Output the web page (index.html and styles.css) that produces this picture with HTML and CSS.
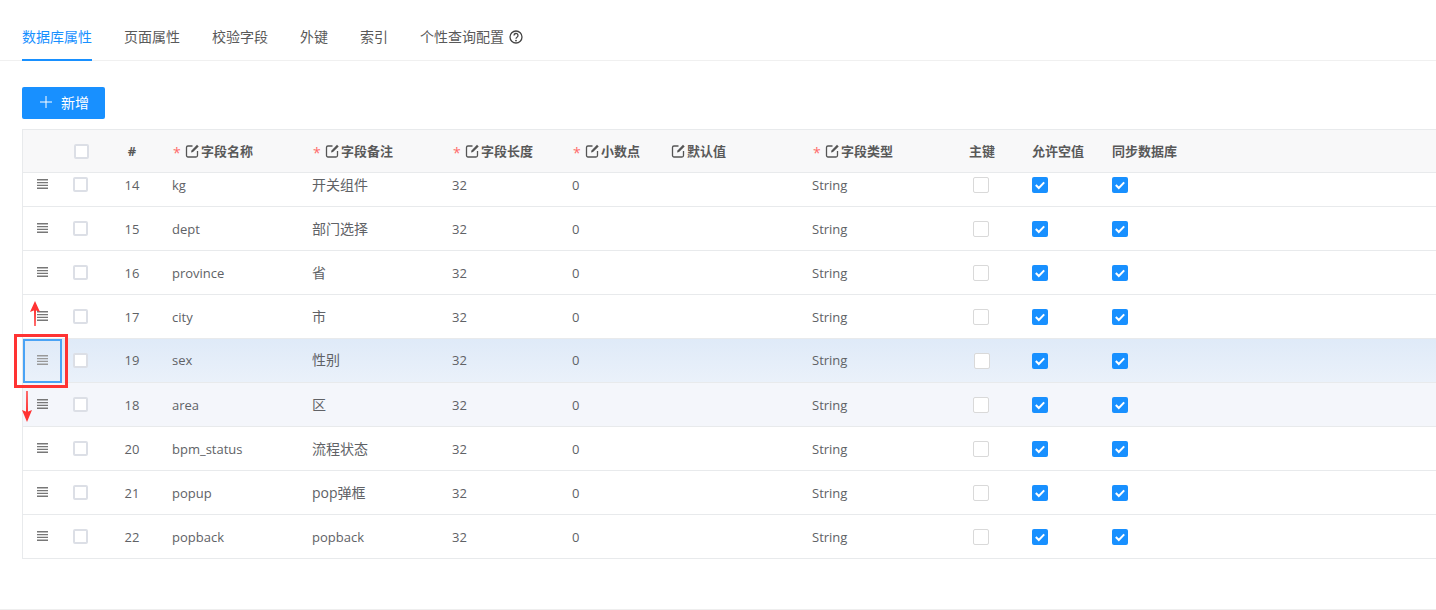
FILE: index.html

```html
<!DOCTYPE html>
<html lang="en">
<head>
  <meta charset="UTF-8" />
  <title>数据库属性</title>
  <link rel="stylesheet" href="styles.css">
</head>
<body>

  <svg class="defs" width="0" height="0">
    <symbol id="edit" viewBox="0 0 14 14">
      <path d="M12 7v4.500a1.500 1.500 0 0 1-1.500 1.500H2.500A1.500 1.500 0 0 1 1 11.500V3.500A1.500 1.500 0 0 1 2.500 2H7" fill="none" stroke="currentColor" stroke-width="1.300"/>
      <path d="M5.500 8.500 6 6.500 11.500.8 13.200 2.500 7.500 8z" fill="currentColor"/>
    </symbol>
    <symbol id="bars" viewBox="0 0 11 10">
      <path d="M0 .7h11M0 3.600h11M0 6.400h11M0 9.300h11" stroke="currentColor" stroke-width="1.400"/>
    </symbol>
    <symbol id="tick" viewBox="0 0 16 16">
      <path d="M3.800 8 6.800 11 12.200 5.400" fill="none" stroke="#fff" stroke-width="2"/>
    </symbol>
  </svg>

  <div class="tabs">
    <a class="tab active">数据库属性</a>
    <a class="tab">页面属性</a>
    <a class="tab">校验字段</a>
    <a class="tab">外键</a>
    <a class="tab">索引</a>
    <a class="tab">个性查询配置
      <svg class="help" viewBox="0 0 14 14" width="14" height="14">
        <circle cx="7" cy="7" r="6" fill="none" stroke="currentColor" stroke-width="1.300"/>
        <path d="M5 5.500a2 2 0 1 1 3 1.700c-.7.400-1 .8-1 1.600" fill="none" stroke="currentColor" stroke-width="1.300"/>
        <circle cx="7" cy="10.600" r=".9" fill="currentColor"/>
      </svg>
    </a>
  </div>

  <div class="toolbar">
    <button class="add-btn">
      <svg viewBox="0 0 12 12" width="12" height="12"><path d="M6 0v12M0 6h12" stroke="#fff" stroke-width="1"/></svg>
      新增
    </button>
  </div>

  <div class="table">
    <div class="row head">
      <div class="cell"></div>
      <div class="cell center"><span class="box"></span></div>
      <div class="cell center">#</div>
      <div class="cell"><i class="req">*</i><svg class="edit"><use href="#edit"/></svg>字段名称</div>
      <div class="cell"><i class="req">*</i><svg class="edit"><use href="#edit"/></svg>字段备注</div>
      <div class="cell"><i class="req">*</i><svg class="edit"><use href="#edit"/></svg>字段长度</div>
      <div class="cell"><i class="req">*</i><svg class="edit"><use href="#edit"/></svg>小数点</div>
      <div class="cell"><svg class="edit"><use href="#edit"/></svg>默认值</div>
      <div class="cell"><i class="req">*</i><svg class="edit"><use href="#edit"/></svg>字段类型</div>
      <div class="cell center">主键</div>
      <div class="cell wide">允许空值</div>
      <div class="cell wide">同步数据库</div>
    </div>

    <div class="rows">
      <div class="row">
        <div class="cell center handle"><svg class="bars"><use href="#bars"/></svg></div>
        <div class="cell center"><span class="box"></span></div>
        <div class="cell center">14</div>
        <div class="cell">kg</div>
        <div class="cell cn">开关组件</div>
        <div class="cell">32</div>
        <div class="cell">0</div>
        <div class="cell"></div>
        <div class="cell">String</div>
        <div class="cell center"><span class="check"></span></div>
        <div class="cell wide"><span class="check on"><svg><use href="#tick"/></svg></span></div>
        <div class="cell wide"><span class="check on"><svg><use href="#tick"/></svg></span></div>
      </div>
      <div class="row">
        <div class="cell center handle"><svg class="bars"><use href="#bars"/></svg></div>
        <div class="cell center"><span class="box"></span></div>
        <div class="cell center">15</div>
        <div class="cell">dept</div>
        <div class="cell cn">部门选择</div>
        <div class="cell">32</div>
        <div class="cell">0</div>
        <div class="cell"></div>
        <div class="cell">String</div>
        <div class="cell center"><span class="check"></span></div>
        <div class="cell wide"><span class="check on"><svg><use href="#tick"/></svg></span></div>
        <div class="cell wide"><span class="check on"><svg><use href="#tick"/></svg></span></div>
      </div>
      <div class="row">
        <div class="cell center handle"><svg class="bars"><use href="#bars"/></svg></div>
        <div class="cell center"><span class="box"></span></div>
        <div class="cell center">16</div>
        <div class="cell">province</div>
        <div class="cell cn">省</div>
        <div class="cell">32</div>
        <div class="cell">0</div>
        <div class="cell"></div>
        <div class="cell">String</div>
        <div class="cell center"><span class="check"></span></div>
        <div class="cell wide"><span class="check on"><svg><use href="#tick"/></svg></span></div>
        <div class="cell wide"><span class="check on"><svg><use href="#tick"/></svg></span></div>
      </div>
      <div class="row">
        <div class="cell center handle"><svg class="bars"><use href="#bars"/></svg></div>
        <div class="cell center"><span class="box"></span></div>
        <div class="cell center">17</div>
        <div class="cell">city</div>
        <div class="cell cn">市</div>
        <div class="cell">32</div>
        <div class="cell">0</div>
        <div class="cell"></div>
        <div class="cell">String</div>
        <div class="cell center"><span class="check"></span></div>
        <div class="cell wide"><span class="check on"><svg><use href="#tick"/></svg></span></div>
        <div class="cell wide"><span class="check on"><svg><use href="#tick"/></svg></span></div>
      </div>
      <div class="row dragging">
        <div class="cell center handle"><svg class="bars"><use href="#bars"/></svg></div>
        <div class="cell center"><span class="box"></span></div>
        <div class="cell center">19</div>
        <div class="cell">sex</div>
        <div class="cell cn">性别</div>
        <div class="cell">32</div>
        <div class="cell">0</div>
        <div class="cell"></div>
        <div class="cell">String</div>
        <div class="cell center"><span class="check"></span></div>
        <div class="cell wide"><span class="check on"><svg><use href="#tick"/></svg></span></div>
        <div class="cell wide"><span class="check on"><svg><use href="#tick"/></svg></span></div>
      </div>
      <div class="row hover">
        <div class="cell center handle"><svg class="bars"><use href="#bars"/></svg></div>
        <div class="cell center"><span class="box"></span></div>
        <div class="cell center">18</div>
        <div class="cell">area</div>
        <div class="cell cn">区</div>
        <div class="cell">32</div>
        <div class="cell">0</div>
        <div class="cell"></div>
        <div class="cell">String</div>
        <div class="cell center"><span class="check"></span></div>
        <div class="cell wide"><span class="check on"><svg><use href="#tick"/></svg></span></div>
        <div class="cell wide"><span class="check on"><svg><use href="#tick"/></svg></span></div>
      </div>
      <div class="row">
        <div class="cell center handle"><svg class="bars"><use href="#bars"/></svg></div>
        <div class="cell center"><span class="box"></span></div>
        <div class="cell center">20</div>
        <div class="cell">bpm_status</div>
        <div class="cell cn">流程状态</div>
        <div class="cell">32</div>
        <div class="cell">0</div>
        <div class="cell"></div>
        <div class="cell">String</div>
        <div class="cell center"><span class="check"></span></div>
        <div class="cell wide"><span class="check on"><svg><use href="#tick"/></svg></span></div>
        <div class="cell wide"><span class="check on"><svg><use href="#tick"/></svg></span></div>
      </div>
      <div class="row">
        <div class="cell center handle"><svg class="bars"><use href="#bars"/></svg></div>
        <div class="cell center"><span class="box"></span></div>
        <div class="cell center">21</div>
        <div class="cell">popup</div>
        <div class="cell cn">pop弹框</div>
        <div class="cell">32</div>
        <div class="cell">0</div>
        <div class="cell"></div>
        <div class="cell">String</div>
        <div class="cell center"><span class="check"></span></div>
        <div class="cell wide"><span class="check on"><svg><use href="#tick"/></svg></span></div>
        <div class="cell wide"><span class="check on"><svg><use href="#tick"/></svg></span></div>
      </div>
      <div class="row">
        <div class="cell center handle"><svg class="bars"><use href="#bars"/></svg></div>
        <div class="cell center"><span class="box"></span></div>
        <div class="cell center">22</div>
        <div class="cell">popback</div>
        <div class="cell">popback</div>
        <div class="cell">32</div>
        <div class="cell">0</div>
        <div class="cell"></div>
        <div class="cell">String</div>
        <div class="cell center"><span class="check"></span></div>
        <div class="cell wide"><span class="check on"><svg><use href="#tick"/></svg></span></div>
        <div class="cell wide"><span class="check on"><svg><use href="#tick"/></svg></span></div>
      </div>
    </div>
  </div>

  <div class="footer-line"></div>

  <!-- red marks drawn on top of the screenshot -->
  <div class="mark-box"></div>
  <svg class="mark-up" viewBox="0 0 12 25" width="12" height="25"><path d="M5 9h2l-.3 16h-1.400zM6 0l5 11-5-2-5 2z" fill="#f33"/></svg>
  <svg class="mark-down" viewBox="0 0 12 31" width="12" height="31"><path d="M5.300 0h1.400l.3 21H5zM1 19l5 2 5-2-5 12z" fill="#f33"/></svg>

</body>
</html>
```

FILE: styles.css

```css
html, body { margin: 0; padding: 0; }
body { position: relative; height: 610px; overflow: hidden; background: #fff; color: #606266; font-family: "Open Sans", "Noto Sans CJK SC", sans-serif; font-size: 14px; }
.defs { position: absolute; }

.tabs { display: flex; gap: 32px; height: 60px; padding-left: 22px; border-bottom: 1px solid #f0f0f0; }
.tab { display: flex; align-items: center; gap: 4px; height: 60px; box-sizing: border-box; padding-top: 14px; color: #595959; font-size: 14px; line-height: 22px; }
.tab.active { color: #1890ff; position: relative; }
.tab.active::after { content: ""; position: absolute; left: 0; right: 0; bottom: -1px; height: 2px; background: #1890ff; }
.help { color: #444; margin-left: 1px; }

.toolbar { padding: 26px 0 10px 22px; }
.add-btn { display: flex; align-items: center; gap: 9px; width: 83px; height: 32px; padding: 0 0 2px 18px; border: none; border-radius: 2px; background: #1890ff; color: #fff; font-family: inherit; font-size: 14px; }

.table { margin-left: 22px; border-left: 1px solid #e8eaec; border-top: 1px solid #e8eaec; }
.row { display: grid; grid-template-columns: 39px 38px 64px 140px 140px 120px 100px 140px 140px 76px 80px 1fr; height: 44px; box-sizing: border-box; border-bottom: 1px solid #e8eaec; font-size: 13px; line-height: 20px; }
.cell { display: flex; align-items: center; padding-left: 8px; white-space: nowrap; }
.cell.center { justify-content: center; padding-left: 0; }
.cell.wide { padding-left: 12px; }
.cell.cn { font-size: 14px; }

.head { height: 43px; background: #f8f8f9; font-weight: bold; color: #595959; }
.req { width: 7px; color: #ff6b6b; font-style: normal; font-weight: normal; font-size: 14px; margin-left: 1px; margin-right: 6px; padding-top: 4px; }
.edit { width: 15px; height: 14px; margin-left: -1px; color: #555; margin-right: 1px; }

.rows { height: 386px; overflow: hidden; }
.rows .row:first-child { margin-top: -10px; }
.rows .box { margin-right: 2px; }
.rows .center .check { margin-right: 2px; }
.handle { color: #777; padding-bottom: 1px; }
.bars { width: 11px; height: 10px; }

.box { display: block; width: 15px; height: 15px; box-sizing: border-box; border: 2px solid #dcdfe6; border-radius: 2px; background: #fff; }
.check { display: block; width: 16px; height: 16px; box-sizing: border-box; border: 1px solid #d9d9d9; border-radius: 2px; background: #fff; }
.check.on { border: none; background: #1890ff; }
.check svg { display: block; width: 16px; height: 16px; }

.dragging { background: linear-gradient(#dfeaf8, #eaf1fa); padding-bottom: 1px; }
.dragging .handle { color: #999; border: 2px solid #4aa3f5; box-sizing: border-box; padding: 0 0 2px 0; margin-bottom: -2px; }
.dragging .check { margin-top: 2px; }
.dragging .center .check { margin-right: 0; }
.hover { background: #f4f6fb; }

.footer-line { position: absolute; left: 0; right: 0; top: 609px; height: 1px; background: #eee; }

.mark-box { position: absolute; left: 14px; top: 334px; width: 54px; height: 54px; box-sizing: border-box; border: 3px solid #f33; }
.mark-up { position: absolute; left: 29px; top: 301px; }
.mark-down { position: absolute; left: 21px; top: 391px; }
```
